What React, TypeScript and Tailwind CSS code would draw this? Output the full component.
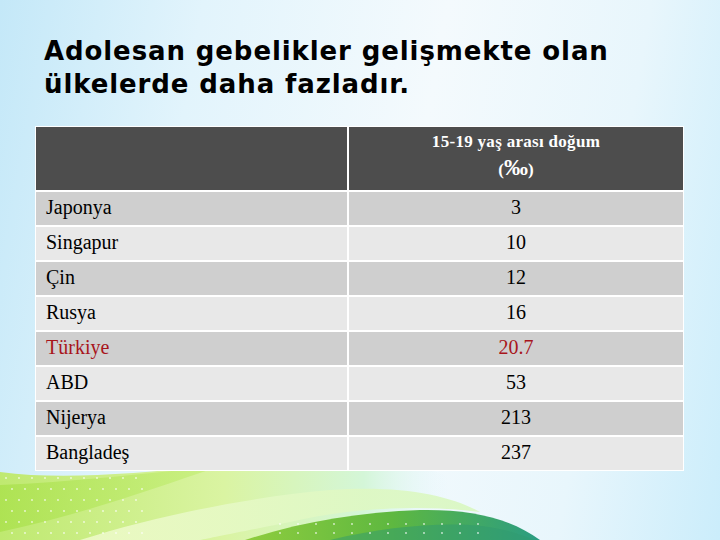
import React from 'react';

type Row = { country: string; value: string; highlight?: boolean };

const rows: Row[] = [
  { country: 'Japonya', value: '3' },
  { country: 'Singapur', value: '10' },
  { country: 'Çin', value: '12' },
  { country: 'Rusya', value: '16' },
  { country: 'Türkiye', value: '20.7', highlight: true },
  { country: 'ABD', value: '53' },
  { country: 'Nijerya', value: '213' },
  { country: 'Bangladeş', value: '237' },
];

// decorative green waves along the bottom of the slide
const Waves: React.FC = () => (
  <svg className="absolute left-0 bottom-0" width="720" height="80" viewBox="0 0 720 80">
    <defs>
      <linearGradient id="g1" x1="0" y1="0" x2="1" y2="0">
        <stop offset="0" stopColor="#bfe970" />
        <stop offset="0.4" stopColor="#daf4a2" />
        <stop offset="0.65" stopColor="#d4f6d8" />
        <stop offset="0.8" stopColor="#dff5fb" stopOpacity="0" />
      </linearGradient>
      <linearGradient id="g2" x1="0" y1="0" x2="1" y2="0">
        <stop offset="0" stopColor="#8fcd3e" />
        <stop offset="0.5" stopColor="#5eb840" />
        <stop offset="1" stopColor="#2a9c82" />
      </linearGradient>
      <linearGradient id="g3" x1="0" y1="0" x2="1" y2="0">
        <stop offset="0" stopColor="#eefac8" />
        <stop offset="1" stopColor="#d8f7c0" />
      </linearGradient>
      <linearGradient id="g4" x1="0" y1="0" x2="1" y2="0">
        <stop offset="0" stopColor="#a7e047" />
        <stop offset="1" stopColor="#c6ef7a" />
      </linearGradient>
    </defs>
    <path d="M0 12 L0 80 L560 80 C530 55 490 28 430 10 C360 -2 280 -2 210 6 C130 14 60 20 0 12 Z" fill="url(#g1)" />
    <path d="M0 25 C70 22 140 14 220 6 C150 30 80 55 0 72 Z" fill="url(#g4)" opacity="0.7" />
    <path d="M80 80 C150 58 240 38 330 30 C400 25 450 35 480 52 C420 44 350 48 290 62 C240 72 210 78 200 80 Z" fill="url(#g3)" opacity="0.9" />
    <path d="M245 80 C300 62 360 52 420 50 C470 49 510 58 540 80 Z" fill="url(#g2)" />
    <path d="M330 80 C380 68 430 63 470 65 C500 67 520 74 534 80 Z" fill="#2f9a70" opacity="0.5" />
    <g fill="#ffffff" opacity="0.75">
      {Array.from({ length: 66 }).map((_, i) => (
        <circle key={i} cx={6 + (i % 11) * 13 + ((Math.floor(i / 11) % 2) * 6)} cy={18 + Math.floor(i / 11) * 11} r="0.9" />
      ))}
      {Array.from({ length: 24 }).map((_, i) => (
        <circle key={'b' + i} cx={280 + (i % 12) * 18} cy={64 + Math.floor(i / 12) * 9} r="0.9" />
      ))}
    </g>
  </svg>
);

const App: React.FC = () => {
  return (
    <div className="relative w-[720px] h-[540px] overflow-hidden bg-[linear-gradient(100deg,#c4e8f8_0%,#e2f4fc_25%,#f4fafd_55%,#e8f6fc_80%,#cbedfb_100%)]">
      <Waves />
      <div className="relative pl-[44px] pt-[35px]">
        <h1 className="font-['DejaVu_Sans',sans-serif] font-bold text-[26px] leading-[33px] tracking-[0.9px] text-black">
          Adolesan gebelikler gelişmekte olan
          <br />
          ülkelerde daha fazladır.
        </h1>
      </div>
      <div className="relative ml-[35px] mt-[25px] w-[649px] bg-white p-px font-['Liberation_Serif',serif]">
        <div className="grid grid-cols-[311px_1fr] gap-[2px]">
          <div className="bg-[#4d4d4d] h-[63px]" />
          <div className="bg-[#4d4d4d] h-[63px] flex flex-col items-center pt-[4px] text-white font-bold">
            <span className="text-[17px] leading-[22px] tracking-[0.3px]">15-19 yaş arası doğum</span>
            <span className="text-[17px] leading-[28px]">
              (<span className="text-[24px]">‰</span>)
            </span>
          </div>
          {rows.map((r, i) => {
            const bg = i % 2 === 0 ? 'bg-[#cfcfcf]' : 'bg-[#e8e8e8]';
            const color = r.highlight ? 'text-[#a8151b]' : 'text-black';
            return (
              <React.Fragment key={r.country}>
                <div className={`${bg} ${color} h-[33px] flex items-center pl-[10px] pb-[3px] text-[20px]`}>{r.country}</div>
                <div className={`${bg} ${color} h-[33px] flex items-center justify-center pb-[3px] text-[20px]`}>{r.value}</div>
              </React.Fragment>
            );
          })}
        </div>
      </div>
    </div>
  );
};

export default App;
